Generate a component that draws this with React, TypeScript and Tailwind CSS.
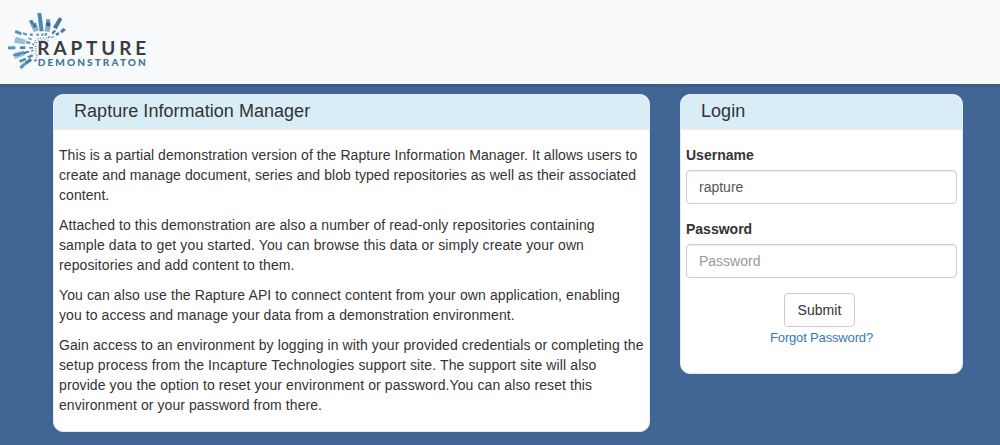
import React from 'react';

const rays: [string, string][] = [
  ['112,39 124,39 131,94 119,94', '#4c88b3'],
  ['87,62 97,59 106,78 96,82', '#4583b0'],
  ['92,75 109,67 117,91 102,96', '#8bb2cf'],
  ['97,72 104,69 110,80 101,84', '#397398'],
  ['138,58 150,58 151,72 139,72', '#6696b7'],
  ['137,70 153,73 149,96 134,94', '#8eadc4'],
  ['139,66 151,69 149,80 139,78', '#315f88'],
  ['177,52 187,57 170,88 159,82', '#4b7797'],
  ['190,83 198,90 186,100 180,93', '#50809f'],
  ['166,100 176,97 178,104 169,107', '#557f9c'],
  ['155,96 164,89 168,94 158,104', '#527e9d'],
  ['47,89 66,98 62,106 44,98', '#5395c1'],
  ['70,97 82,101 79,107 68,103', '#5395c1'],
  ['47,110 77,119 74,133 42,128', '#9abdd7'],
  ['79,122 92,126 90,133 78,130', '#679ab8'],
  ['24,139 46,139 46,148 24,148', '#4896c8'],
  ['60,139 76,139 76,147 60,147', '#4383ad'],
  ['41,160 71,151 76,165 45,178', '#a0c4dd'],
  ['40,163 64,156 72,160 54,169 40,169', '#528db5'],
  ['68,157 86,152 88,157 71,163', '#3b739a'],
  ['57,181 76,173 79,180 61,188', '#4a88b1'],
  ['58,200 73,187 79,193 65,208', '#5596c2'],
  ['74,186 91,174 96,182 79,194', '#427fa7'],
  ['82,169 97,163 100,169 86,175', '#4b86ac'],
  ['90,101 98,101 98,107 90,107', '#417ca2'],
  ['109,101 117,101 117,107 109,107', '#6698ba'],
  ['123,101 130,100 131,107 124,108', '#709bb6'],
  ['134,99 142,99 141,107 133,107', '#729ab4'],
  ['86,112 96,116 94,121 84,117', '#6f9fbf'],
  ['97,130 104,132 102,137 96,135', '#729bb7'],
  ['88,141 99,141 99,146 88,146', '#4c88ad'],
  ['92,151 101,149 102,153 94,156', '#719cb8'],
  ['101,181 108,176 111,181 105,186', '#558ab0'],
  ['143,110 150,108 150,113 144,115', '#668eaa'],
  ['153,111 161,108 162,112 154,115', '#6b91aa'],
];

const dots: [number, number][] = [
  [104, 120], [111, 115], [119, 113], [128, 113], [137, 112],
  [102, 126], [108, 126], [114, 121], [123, 119], [132, 118], [142, 119],
  [105, 138], [105, 145], [106, 152], [104, 160], [109, 165], [108, 170],
];

function Logo() {
  return (
    <svg className="block h-[84px] w-[160px]" viewBox="0 0 480 252" role="img" aria-label="Rapture">
      {rays.map(([points, fill]) => <polygon key={points} points={points} fill={fill} />)}
      {dots.map(([x, y]) => <rect key={`${x}-${y}`} x={x} y={y} width="4" height="3" fill="#5c8fad" />)}
      <text x="112" y="165" fontFamily="Lato, sans-serif" fontWeight="700" fontSize="58" letterSpacing="12" textLength="338" lengthAdjust="spacingAndGlyphs" fill="#393c40">RAPTURE</text>
      <text x="113" y="197" fontFamily="Lato, sans-serif" fontWeight="900" fontSize="29" letterSpacing="6" textLength="331" lengthAdjust="spacingAndGlyphs" fill="#457596">DEMONSTRATON</text>
    </svg>
  );
}

const paragraphs: [string, string][][] = [
  [
    ['This is a partial demonstration version of the Rapture Information Manager. It allows users to', 'tracking-[0.06px]'],
    ['create and manage document, series and blob typed repositories as well as their associated', 'tracking-[0.075px]'],
    ['content.', 'tracking-[0.06px]'],
  ],
  [
    ['Attached to this demonstration are also a number of read-only repositories containing', 'tracking-[0.095px]'],
    ['sample data to get you started. You can browse this data or simply create your own', 'tracking-[0.12px]'],
    ['repositories and add content to them.', 'tracking-[0.12px]'],
  ],
  [
    ['You can also use the Rapture API to connect content from your own application, enabling', 'tracking-[0.11px]'],
    ['you to access and manage your data from a demonstration environment.', 'tracking-[0.075px]'],
  ],
  [
    ['Gain access to an environment by logging in with your provided credentials or completing the', 'tracking-[0.095px]'],
    ['setup process from the Incapture Technologies support site. The support site will also', 'tracking-[0.12px]'],
    ['provide you the option to reset your environment or password.You can also reset this', 'tracking-[0.1px]'],
    ['environment or your password from there.', 'tracking-[0.08px]'],
  ],
];

function Panel({ title, className, children }: { title: string; className: string; children: React.ReactNode }) {
  return (
    <section className={`overflow-hidden rounded-[10px] border border-[#e7eaec] bg-white ${className}`}>
      <h2 className="h-[35px] border-b-2 border-[#e7eaec] bg-[#d9edf7] pl-5 text-[18px] leading-[32px] tracking-[0.04px]">{title}</h2>
      {children}
    </section>
  );
}

const inputClass = 'block h-[34px] w-full rounded border border-[#ccc] bg-white px-3 text-[14px] text-[#555] shadow-[inset_0_1px_1px_rgba(0,0,0,0.075)] outline-none placeholder:text-[#999]';

export default function App() {
  return (
    <div className="h-[445px] overflow-hidden bg-[#416594] font-['Liberation_Sans',Arial,sans-serif] text-[14px] leading-5 text-[#333]">
      <header className="h-[84px] bg-[#f7f9fb]"><Logo /></header>
      <div className="h-[3px] bg-[#3b5b86]" />
      <main className="flex items-start gap-[30px] pt-[7px] pl-[53px]">
        <Panel title="Rapture Information Manager" className="h-[338px] w-[597px]">
          <div className="flex flex-col gap-2.5 pt-[15px] pl-[5px]">
            {paragraphs.map((lines) => (
              <p key={lines[0][0]}>
                {lines.map(([line, tracking]) => <span key={line} className={`block whitespace-nowrap ${tracking}`}>{line}</span>)}
              </p>
            ))}
          </div>
        </Panel>
        <Panel title="Login" className="h-[280px] w-[283px]">
          <form className="px-[5px] pt-[15px]" onSubmit={(e) => e.preventDefault()}>
            <label htmlFor="username" className="mb-[5px] block font-bold">Username</label>
            <input id="username" className={inputClass} defaultValue="rapture" />
            <label htmlFor="password" className="mt-[15px] mb-[5px] block font-bold">Password</label>
            <input id="password" type="password" className={inputClass} placeholder="Password" />
            <div className="flex flex-col items-center pt-[15px]">
              <button className="mr-1 h-[34px] w-[71px] rounded border border-[#ccc] bg-white tracking-[0.08px]">Submit</button>
              <a href="#" className="text-[13px] leading-[22px] tracking-[-0.16px] text-[#337ab7]">Forgot Password?</a>
            </div>
          </form>
        </Panel>
      </main>
    </div>
  );
}
